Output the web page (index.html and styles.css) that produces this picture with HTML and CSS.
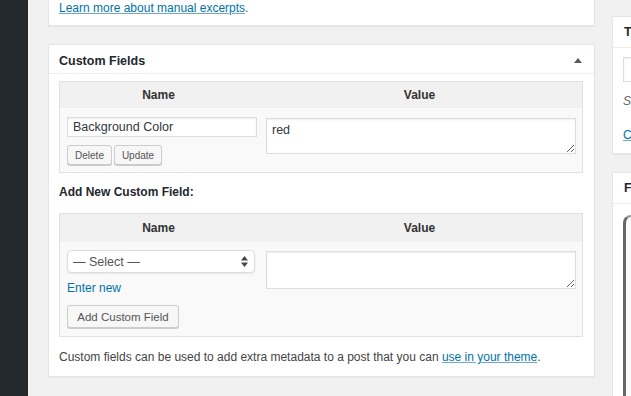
FILE: index.html
```html
<!DOCTYPE html>
<html lang="en">
<head>
    <meta charset="UTF-8">
    <meta name="viewport" content="width=device-width, initial-scale=1.0">
    <title>Edit Post</title>
    <link rel="stylesheet" href="styles.css">
</head>
<body>
    <div class="adminmenu"></div>
    <div class="wrap">
        <div class="main">
            <div class="postbox excerpt">
                <p><a href="#">Learn more about manual excerpts</a>.</p>
            </div>

            <div class="postbox">
                <div class="hndle">
                    <span>Custom Fields</span>
                    <svg class="toggle" width="8" height="5" viewBox="0 0 8 5"><path d="M0 5 L4 0 L8 5 Z" fill="#555d66"/></svg>
                </div>
                <div class="inside">
                    <div class="fields">
                        <div class="th">Name</div>
                        <div class="th">Value</div>
                        <div class="key">
                            <input class="text" type="text" value="Background Color">
                            <div class="actions">
                                <button class="btn small delete">Delete</button>
                                <button class="btn small update">Update</button>
                            </div>
                        </div>
                        <div class="val">
                            <textarea class="area">red</textarea>
                        </div>
                    </div>

                    <p class="add-title">Add New Custom Field:</p>

                    <div class="fields new">
                        <div class="th">Name</div>
                        <div class="th">Value</div>
                        <div class="key">
                            <div class="select">
                                <span>— Select —</span>
                                <svg width="7" height="11" viewBox="0 0 7 11"><path d="M0 4.5 L3.5 0 L7 4.5 Z M0 6.5 L3.5 11 L7 6.5 Z" fill="#444"/></svg>
                            </div>
                            <a class="enter-new" href="#">Enter new</a>
                            <button class="btn add">Add Custom Field</button>
                        </div>
                        <div class="val">
                            <textarea class="area tall"></textarea>
                        </div>
                    </div>

                    <p class="note">Custom fields can be used to add extra metadata to a post that you can <a href="#">use in your theme</a>.</p>
                </div>
            </div>
        </div>

        <div class="side">
            <div class="postbox tags">
                <div class="hndle"><span>Tags</span></div>
                <div class="inside">
                    <input class="text tag-input" type="text">
                    <p class="howto">Separate tags with commas</p>
                    <a class="most-used" href="#">Choose from the most used tags</a>
                </div>
            </div>
            <div class="postbox featured">
                <div class="hndle"><span>Featured Image</span></div>
                <div class="inside">
                    <div class="thumb"></div>
                </div>
            </div>
        </div>
    </div>
</body>
</html>
```

FILE: styles.css
```css
body {
    margin: 0;
    height: 396px;
    overflow: hidden;
    display: flex;
    background-color: #f1f1f1;
    font-family: "Liberation Sans", Arial, sans-serif;
    font-size: 12px;
    color: #444;
}
a {
    color: #0073aa;
    text-decoration-color: #6fa8c8;
}
.adminmenu {
    flex: none;
    width: 28px;
    background-color: #23282d;
}
.wrap {
    display: flex;
    gap: 17px;
    padding-left: 20px;
}
.main {
    flex: none;
    width: 547px;
}
.side {
    flex: none;
    width: 220px;
    padding-top: 16px;
}
.postbox {
    background-color: #fff;
    border: 1px solid #e5e5e5;
    box-shadow: 0 1px 1px rgba(0, 0, 0, 0.04);
}
.excerpt {
    border-top: none;
}
.excerpt p {
    margin: 0;
    padding: 0 11px 9px 10px;
    line-height: 16px;
}
.main .postbox + .postbox {
    margin-top: 18px;
}
.hndle {
    display: flex;
    justify-content: space-between;
    align-items: center;
    box-sizing: border-box;
    height: 29px;
    padding: 3px 12px 0 10px;
    border-bottom: 1px solid #eee;
    font-size: 12.5px;
    font-weight: bold;
    color: #23282d;
}
.inside {
    padding: 7px 11px 0 10px;
}
.fields {
    display: grid;
    grid-template-columns: 197px 1fr;
    border: 1px solid #e1e1e1;
    background-color: #f9f9f9;
}
.fields .th {
    height: 26px;
    line-height: 26px;
    text-align: center;
    font-weight: bold;
    color: #333;
    background-color: #f1f1f1;
}
.fields.new .th {
    height: 28px;
    line-height: 28px;
}
.key {
    padding: 9px 0 7px 7px;
}
.val {
    padding: 10px 6px 0 9px;
}
.text {
    box-sizing: border-box;
    display: block;
    width: 190px;
    height: 20px;
    margin: 0;
    padding: 0 5px;
    border: 1px solid #ddd;
    box-shadow: inset 0 1px 2px rgba(0, 0, 0, 0.07);
    font-family: inherit;
    font-size: 12.5px;
    color: #32373c;
    outline: none;
}
.area {
    box-sizing: border-box;
    display: block;
    width: 100%;
    height: 36px;
    margin: 0;
    padding: 4px 5px;
    border: 1px solid #ddd;
    box-shadow: inset 0 1px 2px rgba(0, 0, 0, 0.07);
    font-family: inherit;
    font-size: 12.5px;
    color: #32373c;
    outline: none;
}
.area.tall {
    height: 38px;
}
.actions {
    display: flex;
    gap: 2px;
    margin-top: 8px;
}
.btn {
    box-sizing: border-box;
    margin: 0;
    padding: 0 9px;
    border: 1px solid #ccc;
    border-radius: 3px;
    background-color: #f7f7f7;
    box-shadow: 0 1px 0 #ccc;
    font-family: inherit;
    color: #555;
    cursor: pointer;
}
.btn.small {
    height: 20px;
    font-size: 10px;
    padding: 0;
}
.btn.delete {
    width: 45px;
}
.btn.update {
    width: 48px;
}
.btn.add {
    display: block;
    width: 112px;
    height: 23px;
    margin-top: 9px;
    font-size: 11.5px;
}
.new .key {
    padding: 8px 0 8px 7px;
}
.new .val {
    padding-top: 9px;
}
.select {
    box-sizing: border-box;
    display: flex;
    justify-content: space-between;
    align-items: center;
    width: 188px;
    height: 23px;
    padding: 0 6px 0 5px;
    border: 1px solid #ddd;
    border-radius: 4px;
    background-color: #fff;
    box-shadow: 0 1px 2px rgba(0, 0, 0, 0.07);
    font-size: 12.5px;
    color: #555;
}
.enter-new {
    display: block;
    margin-top: 7px;
    line-height: 16px;
    text-decoration: none;
}
.add-title {
    margin: 11px 0 13px;
    line-height: 16px;
    font-weight: bold;
    color: #23282d;
}
.note {
    margin: 12px 0 0;
    padding-bottom: 11px;
    line-height: 16px;
}
.side .hndle {
    height: 31px;
    padding: 0 0 0 11px;
}
.tags .inside {
    padding: 9px 11px 10px 10px;
}
.tag-input {
    height: 25px;
    width: 150px;
}
.howto {
    margin: 11px 0 0;
    line-height: 16px;
    font-style: italic;
    color: #666;
}
.most-used {
    display: block;
    margin-top: 18px;
    line-height: 16px;
}
.featured {
    margin-top: 18px;
}
.featured .inside {
    padding: 11px 11px 0 10px;
}
.thumb {
    height: 220px;
    border-top: 2px solid #999;
    border-left: 3px solid #666;
    border-top-left-radius: 8px;
    background-color: #fafafa;
}
```
